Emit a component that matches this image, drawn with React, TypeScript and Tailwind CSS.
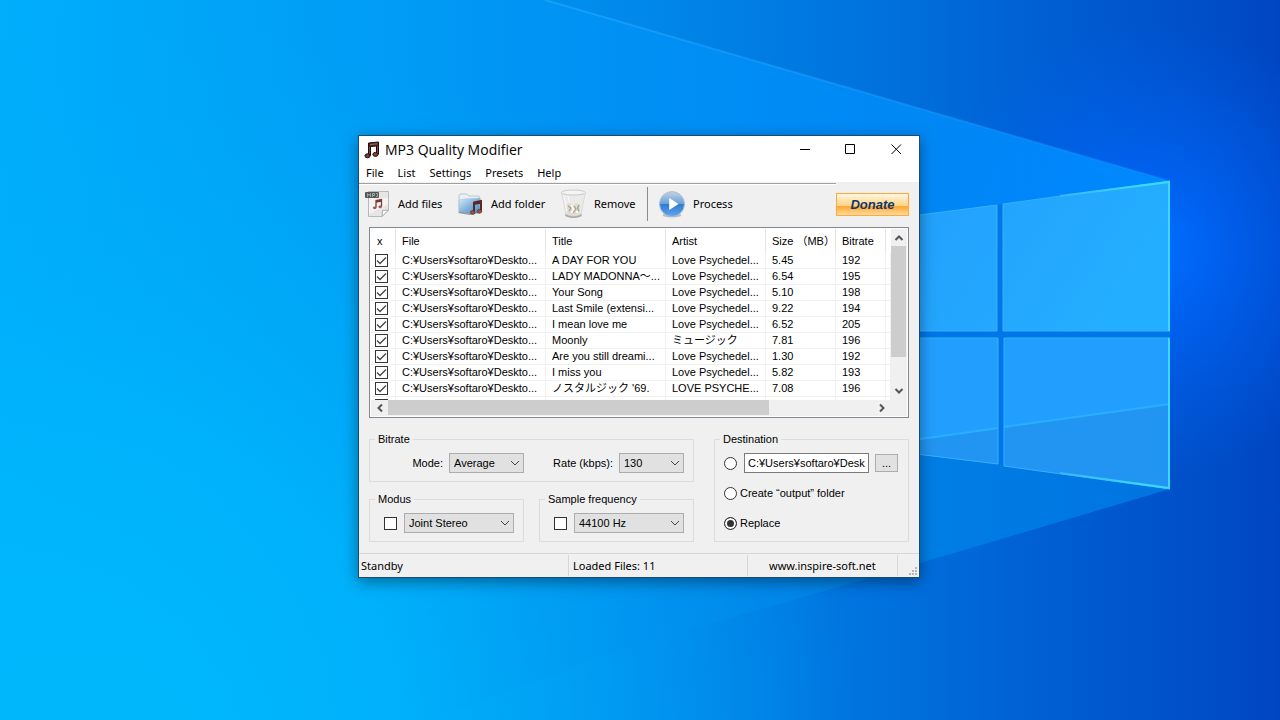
import type { ReactNode } from "react";
import { useState } from "react";

interface Track {
  file: string;
  title: string;
  artist: string;
  size: string;
  bitrate: string;
}

const FILE = "C:¥Users¥softaro¥Deskto...";
const LOVE = "Love Psychedel...";

const TRACKS: Track[] = [
  { file: FILE, title: "A DAY FOR YOU", artist: LOVE, size: "5.45", bitrate: "192" },
  { file: FILE, title: "LADY MADONNA～...", artist: LOVE, size: "6.54", bitrate: "195" },
  { file: FILE, title: "Your Song", artist: LOVE, size: "5.10", bitrate: "198" },
  { file: FILE, title: "Last Smile (extensi...", artist: LOVE, size: "9.22", bitrate: "194" },
  { file: FILE, title: "I mean love me", artist: LOVE, size: "6.52", bitrate: "205" },
  { file: FILE, title: "Moonly", artist: "ミュージック", size: "7.81", bitrate: "196" },
  { file: FILE, title: "Are you still dreami...", artist: LOVE, size: "1.30", bitrate: "192" },
  { file: FILE, title: "I miss you", artist: LOVE, size: "5.82", bitrate: "193" },
  { file: FILE, title: "ノスタルジック '69.", artist: "LOVE PSYCHE...", size: "7.08", bitrate: "196" },
];

const COLUMNS = [
  { label: "File", width: "w-[150px]" },
  { label: "Title", width: "w-[120px]" },
  { label: "Artist", width: "w-[100px]" },
  { label: "Size （MB）", width: "w-[70px]" },
  { label: "Bitrate", width: "w-[50px]" },
];

const Wallpaper = () => (
  <svg aria-hidden="true" className="absolute inset-0 h-full w-full" preserveAspectRatio="xMidYMid slice" viewBox="0 0 1280 720">
    <defs>
      <linearGradient id="sky" x1="0" x2="1" y1="0" y2="0">
        <stop offset="0" stopColor="#00aefc" />
        <stop offset="0.3" stopColor="#009cf4" />
        <stop offset="0.5" stopColor="#0088ea" />
        <stop offset="0.7" stopColor="#0070dc" />
        <stop offset="0.85" stopColor="#005ad0" />
        <stop offset="1" stopColor="#0046c2" />
      </linearGradient>
      <radialGradient id="glow" cx="1150" cy="250" gradientUnits="userSpaceOnUse" r="230">
        <stop offset="0" stopColor="#0070ff" />
        <stop offset="0.3" stopColor="#0068ff" stopOpacity="0.7" />
        <stop offset="1" stopColor="#0060f0" stopOpacity="0" />
      </radialGradient>
      <radialGradient id="floor" cx="100" cy="760" gradientUnits="userSpaceOnUse" r="760">
        <stop offset="0" stopColor="#00b8fc" />
        <stop offset="0.4" stopColor="#00b6fc" stopOpacity="0.8" />
        <stop offset="1" stopColor="#00a8f8" stopOpacity="0" />
      </radialGradient>
      <linearGradient id="beam" gradientUnits="userSpaceOnUse" x1="300" x2="1170" y1="0" y2="0">
        <stop offset="0" stopColor="#00a4ff" stopOpacity="0" />
        <stop offset="0.5" stopColor="#0096ff" stopOpacity="0.6" />
        <stop offset="1" stopColor="#008cff" stopOpacity="0.9" />
      </linearGradient>
      <linearGradient id="beamLow" gradientUnits="userSpaceOnUse" x1="400" x2="1170" y1="0" y2="0">
        <stop offset="0" stopColor="#00a0f4" stopOpacity="0" />
        <stop offset="0.6" stopColor="#0088ea" stopOpacity="0.7" />
        <stop offset="1" stopColor="#0078e4" stopOpacity="0.9" />
      </linearGradient>
      <linearGradient id="pane" x1="0" x2="1" y1="0" y2="0.3">
        <stop offset="0" stopColor="#229cfc" />
        <stop offset="1" stopColor="#24aeff" />
      </linearGradient>
      <linearGradient id="edge" gradientUnits="userSpaceOnUse" x1="545" x2="1170" y1="0" y2="181">
        <stop offset="0" stopColor="#28b0ff" stopOpacity="0.5" />
        <stop offset="1" stopColor="#28a0ff" stopOpacity="0.2" />
      </linearGradient>
      <linearGradient id="rim" gradientUnits="userSpaceOnUse" x1="1060" x2="1140" y1="0" y2="0">
        <stop offset="0" stopColor="#3cb4ff" />
        <stop offset="1" stopColor="#3cd8ff" />
      </linearGradient>
    </defs>
    <rect fill="url(#sky)" height="720" width="1280" />
    <rect fill="url(#floor)" height="720" width="1280" />
    <rect fill="url(#glow)" height="720" width="1280" />
    <path d="M300 0H545L1170 181V335H300z" fill="url(#beam)" />
    <path d="M300 335H1170V489L900 569L620 650L430 720H300z" fill="url(#beamLow)" />
    <path d="M545 0L1170 181" stroke="url(#edge)" strokeWidth="2" />
    <path d="M850 331H1170V338H1004V466L998 464V338H850zM997 205L1003 204V331H997z" fill="#0076e8" />
    <path d="M850 224L997 205V331H850zM1003 204L1170 181V331H1003z" fill="url(#pane)" />
    <path d="M850 338H998V464L850 446zM1004 338H1170V489L1004 466z" fill="#229efe" />
    <path d="M850 449L998 428V464L850 446zM1004 427L1170 404V489L1004 466z" fill="#2295f2" />
    <path d="M850 449L998 428M1004 427L1170 404" stroke="#28b0ff" strokeWidth="2" />
    <path d="M850 224L997 205V331H850M850 338H998V464L850 446M1003 331V204L1170 181M1003 331H1170M1170 338H1004V466L1170 489" fill="none" stroke="#34b0ff" />
    <path d="M1060 196L1169 182V331M1169 338V488L1060 473" fill="none" stroke="url(#rim)" strokeWidth="2" />
  </svg>
);

const NotesIcon = ({ className }: { className: string }) => (
  <svg aria-hidden="true" className={className} viewBox="0 0 16 18">
    <path d="M4.500 2L14.500 1V13H12.500V5L6.500 5.500V14.500H4.500z" fill="#4a2320" stroke="#1c0f0e" />
    <ellipse cx="3.500" cy="14.800" fill="#7c362d" rx="2.600" ry="2" stroke="#1c0f0e" />
    <ellipse cx="11.500" cy="13.400" fill="#8c4034" rx="2.600" ry="2" stroke="#1c0f0e" />
    <path d="M6 3.500L13.500 2.800" stroke="#b06a5c" />
    <path d="M5.500 6V13M13.500 5V12" stroke="#8a463b" />
  </svg>
);

const FileIcon = () => (
  <svg aria-hidden="true" className="h-7 w-[25px]" viewBox="0 0 25 28">
    <path d="M3.500 1.500H23.500V20L17 26.500H3.500z" fill="#e6e6e6" stroke="#b9b9b9" />
    <path d="M4 8H23V14L4 24z" fill="#f4f4f4" />
    <path d="M23.500 20L17 26.500L17.500 20.500z" fill="#fff" stroke="#aaa" />
    <rect fill="#555" height="6" rx="1" width="14" x="0" y="2" />
    <path d="M2.500 7V3.500L4 5.500L5.500 3.500V7M7.500 7V3.500H9.500V5.500H7.500M11 3.500H12.500V6.500H11" fill="none" stroke="#bbb" strokeWidth="0.800" />
    <path d="M11 17.500V10.500L16.500 9.500V16.500M11 12L16.500 11" fill="none" stroke="#7d3a32" strokeWidth="1.300" />
    <ellipse cx="9.700" cy="17.800" fill="#a4564a" rx="1.800" ry="1.400" />
    <ellipse cx="15.200" cy="16.800" fill="#a4564a" rx="1.800" ry="1.400" />
  </svg>
);

const FolderIcon = () => (
  <svg aria-hidden="true" className="h-7 w-[25px]" viewBox="0 0 25 28">
    <defs>
      <linearGradient id="folder" x1="0" x2="1" y1="0" y2="1">
        <stop offset="0" stopColor="#dceaf5" />
        <stop offset="0.500" stopColor="#84b4dc" />
        <stop offset="1" stopColor="#4b86bd" />
      </linearGradient>
    </defs>
    <path d="M1 5L2 4H9L11 6H21L22 8V22H1z" fill="#e9eff4" stroke="#b9c8d4" />
    <path d="M1 10L7 9L22 8V23L13 24L1 22z" fill="url(#folder)" stroke="#a3bfd6" strokeWidth="0.600" />
    <path d="M0 23L2 21.500L14 24L12 25z" fill="#8d9aa4" />
    <path d="M16 21.500V12.500L23 11V20.500M16 14L23 12.500" fill="none" stroke="#5d2722" strokeWidth="2" />
    <ellipse cx="14.700" cy="22.500" fill="#a44e40" rx="2.300" ry="1.900" stroke="#4d201c" strokeWidth="0.600" />
    <ellipse cx="21.500" cy="21.300" fill="#a44e40" rx="2.300" ry="1.900" stroke="#4d201c" strokeWidth="0.600" />
  </svg>
);

const TrashIcon = () => (
  <svg aria-hidden="true" className="h-[30px] w-[25px]" viewBox="0 0 25 30">
    <ellipse cx="12.500" cy="26" fill="#aaa" rx="8.500" ry="3" />
    <path d="M0.500 3.500L5 25Q12.500 29 20 25L24.500 3.500z" fill="#eaeaea" stroke="#d4d4d4" strokeWidth="0.800" />
    <path d="M5.500 16L9 14L12 17L15 14L19.500 15.500L18.500 24.500Q12.500 27.500 6.500 24.500z" fill="#dedacf" />
    <path d="M7 17L10 19L8 22M13 17L15 20L12 24M18 16L16.500 19L18 22" fill="none" stroke="#a79f88" strokeWidth="1.200" />
    <path d="M10 16L12.500 20L10.500 24M15 22L17 24" fill="none" stroke="#fff" strokeWidth="1.500" />
    <ellipse cx="12.500" cy="3.500" fill="#f4f4f4" rx="12" ry="2.500" stroke="#cbcbcb" />
    <path d="M3 7L6 22M7 7L8.500 14" stroke="#fafafa" />
  </svg>
);

const PlayIcon = () => (
  <svg aria-hidden="true" className="h-[29px] w-[26px]" viewBox="0 0 28 29">
    <defs>
      <linearGradient id="play" x1="0" x2="0" y1="0" y2="1">
        <stop offset="0" stopColor="#c3d3e2" />
        <stop offset="0.480" stopColor="#6aa2da" />
        <stop offset="0.520" stopColor="#2f7bd2" />
        <stop offset="1" stopColor="#62a6ee" />
      </linearGradient>
    </defs>
    <ellipse cx="14" cy="26" fill="#bcbcbc" rx="10" ry="2.500" />
    <circle cx="14" cy="14" fill="url(#play)" r="13.400" stroke="#a9bccd" />
    <path d="M11 7.500L21 14L11 20.500z" fill="#fff" />
  </svg>
);

const Chevron = ({ className }: { className: string }) => (
  <svg aria-hidden="true" className={`pointer-events-none h-2 w-2.5 ${className}`} viewBox="0 0 10 8">
    <path d="M1 2L5 6L9 2" fill="none" stroke="currentColor" />
  </svg>
);

const ScrollArrow = ({ d }: { d: string }) => (
  <svg aria-hidden="true" className="h-2.5 w-2.5" viewBox="0 0 10 10">
    <path d={d} fill="none" stroke="#555" strokeWidth="2" />
  </svg>
);

const CheckBox = ({ label, initial = false }: { label: string; initial?: boolean }) => {
  const [checked, setChecked] = useState(initial);
  return (
    <label className="grid size-[13px] shrink-0 place-items-center border border-[#333] bg-white">
      <input aria-label={label} checked={checked} className="size-full appearance-none [grid-area:1/1]" onChange={() => setChecked(!checked)} type="checkbox" />
      {checked ? (
        <svg aria-hidden="true" className="pointer-events-none size-[11px] [grid-area:1/1]" viewBox="0 0 11 11">
          <path d="M1 5.500L4 8.500L10 2.500" fill="none" stroke="#444" strokeWidth="1.300" />
        </svg>
      ) : null}
    </label>
  );
};

const Select = ({ id, label, value, width }: { id: string; label?: string; value: string; width: string }) => (
  <div className={`grid h-5 items-center ${width}`}>
    <select aria-label={label} className="h-5 w-full appearance-none border border-[#adadad] bg-[#e1e1e1] pl-1 [grid-area:1/1]" defaultValue={value} id={id}>
      <option>{value}</option>
    </select>
    <Chevron className="mr-1 justify-self-end text-[#444] [grid-area:1/1]" />
  </div>
);

const Group = ({ title, className = "", children }: { title: string; className?: string; children: ReactNode }) => (
  <fieldset className={`border border-[#dcdcdc] pt-[7px] pb-2 ${className}`}>
    <legend className="ml-[5px] px-[3px] leading-[14px]">{title}</legend>
    {children}
  </fieldset>
);

const Radio = ({ id, value, selected, onSelect, label }: { id: string; value: string; selected: string; onSelect: (value: string) => void; label?: string }) => (
  <input
    aria-label={label}
    checked={selected === value}
    className="size-[13px] shrink-0 appearance-none rounded-full border border-[#333] bg-white checked:bg-[#333] checked:shadow-[inset_0_0_0_2px_#fff]"
    id={id}
    name="destination"
    onChange={() => onSelect(value)}
    type="radio"
  />
);

const ToolButton = ({ icon, label, width }: { icon: ReactNode; label: string; width: string }) => (
  <button className={`flex items-center gap-2 ${width}`} type="button">
    {icon}
    <span className="whitespace-nowrap">{label}</span>
  </button>
);

const TrackList = () => (
  <div className="mx-2.5 border border-[#828790] bg-white p-px">
    <div className="flex">
      <div className="h-[171px] flex-1 overflow-hidden">
        <table className="w-full table-fixed border-separate border-spacing-0 text-left">
          <thead>
            <tr>
              <th className="h-6 w-[25px] border-r border-[#e5e5e5] p-0 pl-1.5 font-normal">x</th>
              {COLUMNS.map((column) => (
                <th key={column.label} className={`overflow-hidden border-r border-[#e5e5e5] p-0 pl-1.5 font-normal whitespace-nowrap ${column.width}`}>
                  {column.label}
                </th>
              ))}
              <th className="p-0" />
            </tr>
          </thead>
          <tbody className="leading-[15px] whitespace-nowrap">
            {TRACKS.map((track) => (
              <tr key={track.title} className="[&>td]:h-4 [&>td]:border-r [&>td]:border-b [&>td]:border-[#f0f0f0] [&>td]:p-0 [&>td]:pl-1.5 [&>td:first-child]:pl-1">
                <td>
                  <CheckBox initial label={track.title} />
                </td>
                <td>{track.file}</td>
                <td>{track.title}</td>
                <td>{track.artist}</td>
                <td>{track.size}</td>
                <td>{track.bitrate}</td>
                <td />
              </tr>
            ))}
            <tr className="[&>td]:h-4 [&>td]:border-r [&>td]:border-[#f0f0f0] [&>td]:p-0 [&>td:first-child]:pl-1">
              <td>
                <CheckBox label="Track 10" />
              </td>
              <td />
              <td />
              <td />
              <td />
              <td />
              <td />
            </tr>
          </tbody>
        </table>
      </div>
      <div className="flex w-4 flex-col items-start bg-[#f0f0f0]">
        <button aria-label="Scroll up" className="flex h-[17px] w-[15px] items-center justify-center" type="button">
          <ScrollArrow d="M1.500 7L5 3.500L8.500 7" />
        </button>
        <div className="h-[111px] w-[15px] bg-[#cdcdcd]" />
        <button aria-label="Scroll down" className="mt-auto flex h-[19px] w-[15px] items-center justify-center" type="button">
          <ScrollArrow d="M1.500 3L5 6.500L8.500 3" />
        </button>
      </div>
    </div>
    <div className="flex h-4 bg-[#f0f0f0] pr-4">
      <button aria-label="Scroll left" className="flex h-[15px] w-[17px] items-center justify-center" type="button">
        <ScrollArrow d="M7 1.500L3.500 5L7 8.500" />
      </button>
      <div className="h-[15px] w-[381px] bg-[#cdcdcd]" />
      <button aria-label="Scroll right" className="ml-auto flex h-[15px] w-[19px] items-center justify-center" type="button">
        <ScrollArrow d="M3 1.500L6.500 5L3 8.500" />
      </button>
    </div>
  </div>
);

const Settings = () => {
  const [destination, setDestination] = useState("replace");
  return (
    <div className="flex gap-5 px-2.5 pt-3.5 pb-[11px]">
      <div className="flex flex-1 flex-col gap-2.5">
        <Group title="Bitrate">
          <div className="flex items-center gap-1.5 pr-[9px]">
            <label className="w-[73px] text-right" htmlFor="mode">Mode:</label>
            <Select id="mode" value="Average" width="w-[75px]" />
            <label className="ml-auto" htmlFor="rate">Rate (kbps):</label>
            <Select id="rate" value="130" width="w-[65px]" />
          </div>
        </Group>
        <div className="flex gap-[15px]">
          <Group className="flex-1" title="Modus">
            <div className="flex items-center gap-[7px] pl-3.5">
              <CheckBox label="Use modus" />
              <Select id="modus" label="Modus" value="Joint Stereo" width="w-[110px]" />
            </div>
          </Group>
          <Group className="flex-1" title="Sample frequency">
            <div className="flex items-center gap-[7px] pl-3.5">
              <CheckBox label="Use sample frequency" />
              <Select id="frequency" label="Sample frequency" value="44100 Hz" width="w-[110px]" />
            </div>
          </Group>
        </div>
      </div>
      <Group className="w-[195px]" title="Destination">
        <div className="flex flex-col gap-2.5 pl-[9px]">
          <div className="flex h-5 items-center">
            <Radio id="custom" label="Custom folder" onSelect={setDestination} selected={destination} value="custom" />
            <input aria-label="Folder path" className="ml-[7px] h-5 w-[125px] border border-[#7a7a7a] bg-white px-[3px]" defaultValue="C:¥Users¥softaro¥Desk" type="text" />
            <button aria-label="Browse" className="ml-1.5 h-[18px] w-[23px] border border-[#adadad] bg-[#e1e1e1] leading-4" type="button">...</button>
          </div>
          <div className="flex h-5 items-center gap-[3px]">
            <Radio id="output" onSelect={setDestination} selected={destination} value="output" />
            <label htmlFor="output">Create “output” folder</label>
          </div>
          <div className="flex h-5 items-center gap-[3px]">
            <Radio id="replace" onSelect={setDestination} selected={destination} value="replace" />
            <label htmlFor="replace">Replace</label>
          </div>
        </div>
      </Group>
    </div>
  );
};

export default function App() {
  return (
    <main className="relative flex min-h-screen items-center justify-center overflow-hidden bg-[#0088ea] pr-0.5 pb-[7px]">
      <Wallpaper />
      <section className="relative w-full max-w-[562px] border border-[#1d4a6b] bg-[#f0f0f0] font-['Liberation_Sans','Noto_Sans_CJK_JP',sans-serif] text-[11px] leading-4 text-black shadow-[0_4px_14px_rgba(0,0,0,0.4)]">
        <header className="bg-white font-['Noto_Sans',sans-serif]">
          <div className="flex h-[27px] items-center pl-[5px]">
            <NotesIcon className="h-[18px] w-4" />
            <h1 className="ml-[5px] font-['Open_Sans',sans-serif] text-[14px]">MP3 Quality Modifier</h1>
            <div className="ml-auto flex h-full">
              <button aria-label="Minimize" className="flex w-[46px] items-center justify-center" type="button">
                <svg aria-hidden="true" className="size-[11px]" viewBox="0 0 11 11"><path d="M1 5.500H11" stroke="#000" /></svg>
              </button>
              <button aria-label="Maximize" className="flex w-[46px] items-center justify-center" type="button">
                <svg aria-hidden="true" className="size-[11px]" viewBox="0 0 11 11"><path d="M0.500 0.500H9.500V9.500H0.500z" fill="none" stroke="#000" /></svg>
              </button>
              <button aria-label="Close" className="flex w-[46px] items-center justify-center" type="button">
                <svg aria-hidden="true" className="size-[11px]" viewBox="0 0 11 11"><path d="M0.500 0.500L10 10M10 0.500L0.500 10" stroke="#000" /></svg>
              </button>
            </div>
          </div>
          <nav className="flex h-[19px] items-center gap-3.5 pl-[7px]">
            {["File", "List", "Settings", "Presets", "Help"].map((item) => (
              <button key={item} type="button">{item}</button>
            ))}
          </nav>
        </header>
        <div className="flex h-[45px] items-start pt-px pr-2.5 font-['Noto_Sans',sans-serif]">
          <div className="flex flex-1 items-center border-t border-[#a0a0a0] pl-1.5 shadow-[inset_0_1px_0_#fff]">
            <ToolButton icon={<FileIcon />} label="Add files" width="w-[93px]" />
            <ToolButton icon={<FolderIcon />} label="Add folder" width="w-[103px]" />
            <ToolButton icon={<TrashIcon />} label="Remove" width="w-[86px]" />
            <div className="my-[3px] mr-[11px] h-[34px] w-px bg-[#8c8c8c]" />
            <ToolButton icon={<PlayIcon />} label="Process" width="w-[90px]" />
          </div>
          <button className="mt-2.5 h-[23px] w-[73px] border border-[#ffa93a] bg-linear-to-b from-[#fff6e0] via-[#ffd78c] via-50% to-[#ffe2a8] p-0 font-['Liberation_Sans',sans-serif] text-[13px] font-bold text-[#10386b] italic" type="button">
            <span className="flex h-full items-center justify-center bg-linear-to-b from-transparent from-55% via-[#ffa629] via-60% to-[#ffdc9c]">Donate</span>
          </button>
        </div>
        <TrackList />
        <Settings />
        <footer className="flex h-6 items-stretch border-t border-[#d7d7d7] font-['Noto_Sans',sans-serif] leading-[22px]">
          <div className="my-px flex-1 border-r border-[#d7d7d7] pl-0.5">Standby</div>
          <div className="my-px w-[179px] border-r border-[#d7d7d7] pl-1">Loaded Files: 11</div>
          <a className="my-px w-[150px] border-r border-[#d7d7d7] pl-[21px]" href="#site">www.inspire-soft.net</a>
          <div className="flex w-[21px] items-end justify-end p-0.5">
            <svg aria-hidden="true" className="size-2" viewBox="0 0 8 8">
              <path d="M6 0h2v2H6zM3 3h2v2H3zM6 3h2v2H6zM0 6h2v2H0zM3 6h2v2H3zM6 6h2v2H6z" fill="#b5b5b5" />
            </svg>
          </div>
        </footer>
      </section>
    </main>
  );
}
